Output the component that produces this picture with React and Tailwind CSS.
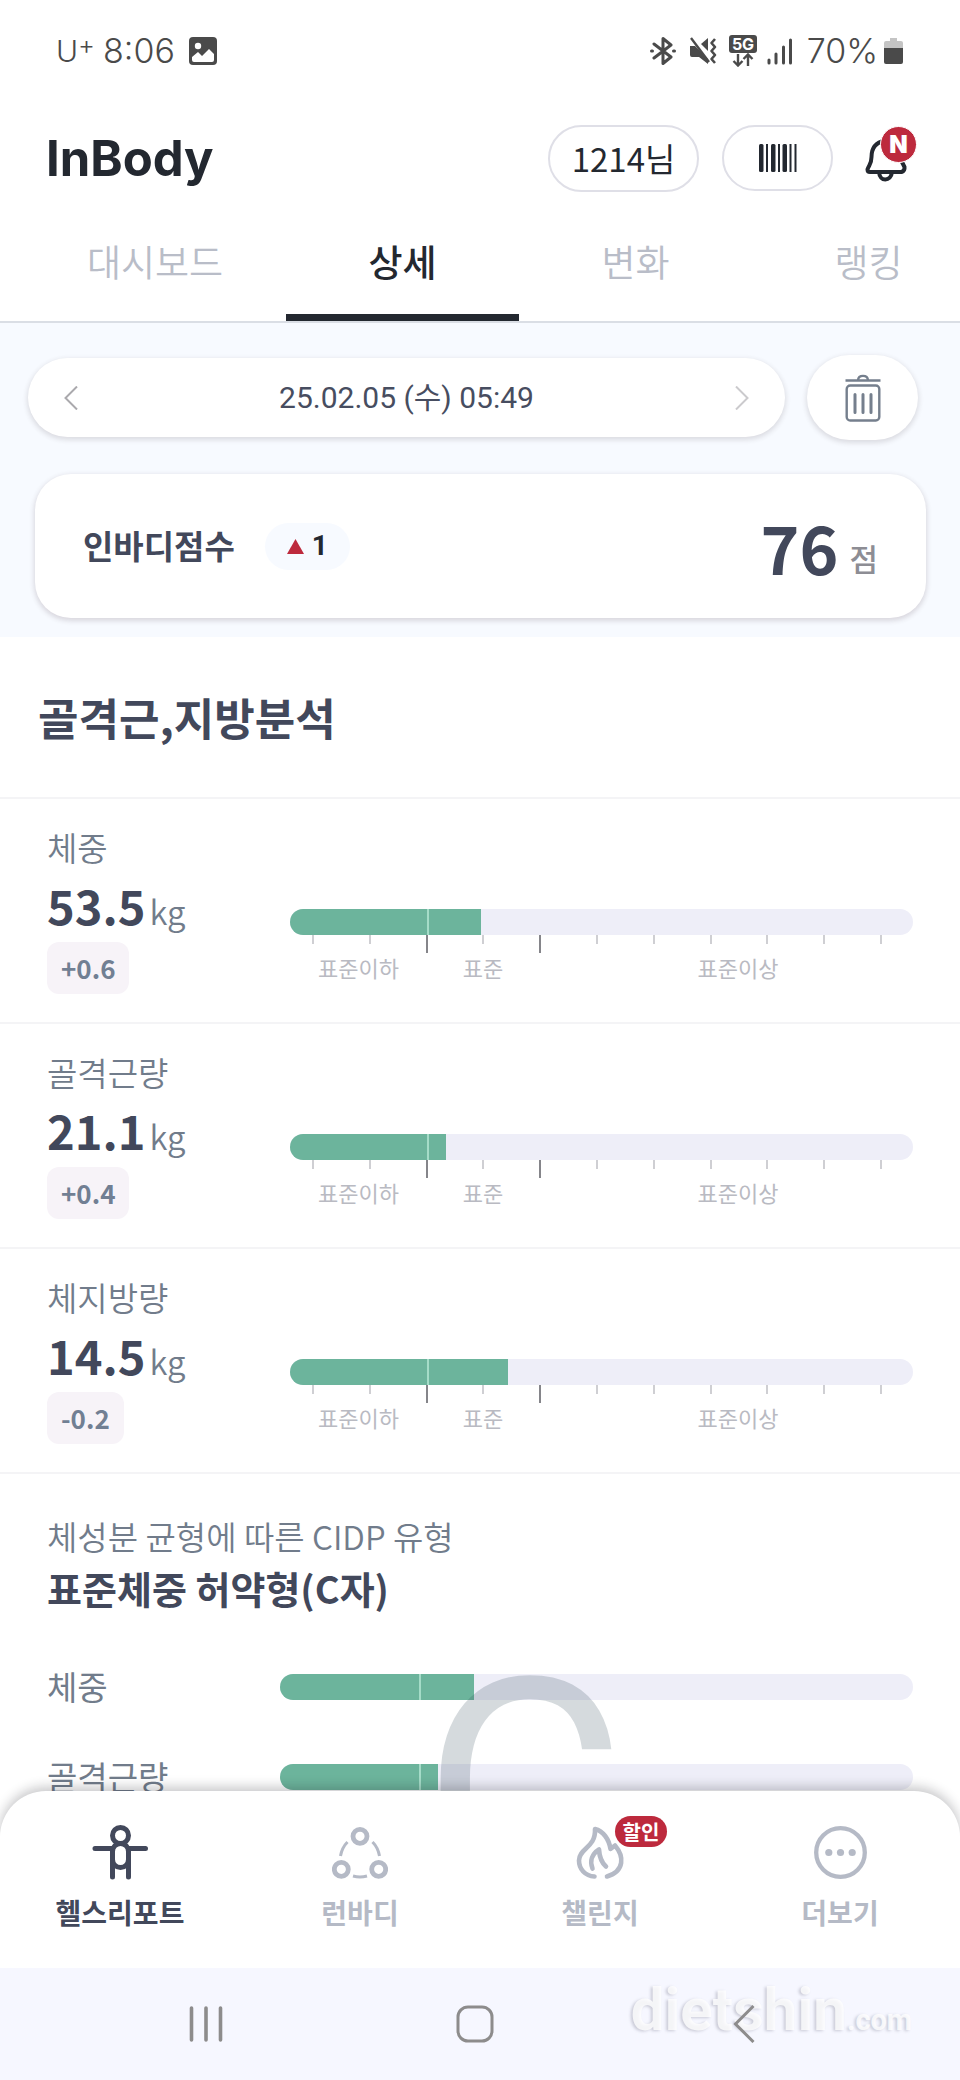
import clsx from 'clsx';

// ============================================
// DATA
// ============================================
const tabs = [
  { label: '대시보드', width: 'w-[262px]' },
  { label: '상세', width: 'w-[233px]', active: true },
  { label: '변화', width: 'w-[233px]' },
  { label: '랭킹', width: 'w-[233px]' },
];

// percent of the bar where the standard range starts
const STANDARD_START = 22;

const metrics = [
  { label: '체중', value: '53.5', diff: '+0.6', percent: 30.7 },
  { label: '골격근량', value: '21.1', diff: '+0.4', percent: 25 },
  { label: '체지방량', value: '14.5', diff: '-0.2', percent: 35 },
];

const cidpRows = [
  { label: '체중', percent: 30.7 },
  { label: '골격근량', percent: 25 },
];

const ticks = [false, false, true, false, true, false, false, false, false, false, false];

// ============================================
// STATUS BAR
// ============================================
const StatusBar = () => (
  <div className="flex h-[102px] items-center pl-14 pr-[57px] font-['Inter',sans-serif] text-[34px] font-light text-[#4a4a4a]">
    <div className="flex items-center">
      <span className="flex items-start text-3xl leading-none">
        U<span className="-mt-1 text-[26px] leading-none">+</span>
      </span>
      <span className="ml-2 leading-none">8:06</span>
      <svg className="ml-[14px] size-7" viewBox="0 0 28 28">
        <rect width="28" height="28" rx="4" fill="#4a4a4a" />
        <circle cx="9" cy="9" r="3.2" fill="#fff" />
        <path d="M3 23V20L9 15L13 19L20 12L25 17V23Q25 25 23 25H5Q3 25 3 23Z" fill="#fff" />
      </svg>
    </div>

    <div className="ml-auto flex items-center">
      <svg className="h-7 w-[26px]" viewBox="0 0 26 28" fill="none" stroke="#4a4a4a" strokeWidth="3" strokeLinejoin="round" strokeLinecap="round">
        <path d="M4 7L21 20L13 26.5V1.5L21 8L4 21" />
        <path d="M1.5 14H2.5M23.5 14H24.5" />
      </svg>
      <svg className="ml-[13px] h-7 w-7" viewBox="0 0 28 28">
        <path d="M1 9H6L19 22V27L10 20H3Q1 20 1 18Z" fill="#4a4a4a" />
        <path d="M12 7L19 1V14Z" fill="#4a4a4a" />
        <path d="M2 1L20 25" stroke="#4a4a4a" strokeWidth="2.4" />
        <path d="M26 2L22.500 6L26 10L22.500 14L26 18L22.500 22L26 26" fill="none" stroke="#4a4a4a" strokeWidth="2.600" strokeLinejoin="round" />
      </svg>
      <svg className="ml-3 h-8 w-7" viewBox="0 0 28 32">
        <rect width="28" height="18" rx="3" fill="#4a4a4a" />
        <text x="14" y="15" textAnchor="middle" fontSize="16" fontWeight="700" fill="#fff">
          5G
        </text>
        <path d="M9 19V30M4.500 26L9 30.500L13.500 26M19 31V20M14.500 24L19 19.500L23.500 24" fill="none" stroke="#4a4a4a" strokeWidth="2.400" />
      </svg>
      <svg className="ml-[10px] h-[27px] w-[26px]" viewBox="0 0 26 27" stroke="#4a4a4a" strokeWidth="3" strokeLinecap="round">
        <path d="M2 22V25M9 16V25M16.500 9V25M23.500 2V25" />
      </svg>
      <span className="ml-[14px] leading-none">70%</span>
      <svg className="ml-1.5 h-7 w-[19px]" viewBox="0 0 19 28">
        <path d="M6 1H13V4H17Q19 4 19 6V12H0V6Q0 4 2 4H6Z" fill="#c4c4c4" />
        <path d="M0 11H19V25Q19 27 17 27H2Q0 27 0 25Z" fill="#4a4a4a" />
      </svg>
    </div>
  </div>
);

// ============================================
// HEADER
// ============================================
const Header = () => (
  <header className="flex h-28 items-center pl-[46px] pr-[43px]">
    <h1 className="font-['Inter',sans-serif] text-[49px] font-bold leading-none text-[#232830]">InBody</h1>

    <button
      type="button"
      className="ml-auto flex h-[67px] w-[151px] items-center justify-center rounded-full border-2 border-[#dfdfe7] text-[33px] leading-none text-[#232830]"
    >
      1214님
    </button>
    <button
      type="button"
      aria-label="바코드"
      className="ml-[23px] flex h-[66px] w-[111px] items-center justify-center rounded-full border-2 border-[#dfdfe7]"
    >
      <svg className="h-7 w-[38px]" viewBox="0 0 38 28" fill="#232830">
        <rect x="0" width="4.500" height="28" rx="1.500" />
        <rect x="7" width="2" height="28" />
        <rect x="12" width="4.500" height="28" rx="1.500" />
        <rect x="19" width="2" height="28" />
        <rect x="23.500" width="4.500" height="28" rx="1.500" />
        <rect x="30.500" width="2" height="28" />
        <rect x="35.500" width="2" height="28" />
      </svg>
    </button>
    <button type="button" aria-label="알림" className="relative ml-8 h-[60px] w-[52px]">
      <svg className="size-full" viewBox="0 0 52 60" fill="none" stroke="#232830" strokeWidth="4">
        <path d="M20 12.500C10 14.500 6.500 21 6.500 29C6.500 36 4 37 2.500 41.500Q2.500 44 5 44H36.500Q40 43 39.500 39L37 34" strokeLinejoin="round" />
        <path d="M14 44C14.500 54 26 54 27 44" />
      </svg>
      <span className="absolute -top-0.5 right-0 flex size-[37px] items-center justify-center rounded-full border border-white bg-[#bd2a3d] font-['Inter',sans-serif] text-2xl font-black leading-none text-white">
        N
      </span>
    </button>
  </header>
);

const Tabs = () => (
  <nav className="flex overflow-hidden border-b-2 border-[#dadee5]">
    {tabs.map((tab) => (
      <button
        key={tab.label}
        type="button"
        className={clsx(
          'h-[107px] shrink-0 border-b-[7px] pb-1 text-[37px]',
          tab.width,
          tab.label === '대시보드' && 'ml-6',
          tab.active ? 'border-[#232830] font-medium text-[#232830]' : 'border-transparent font-[350] text-[#b9bdc8]'
        )}
      >
        {tab.label}
      </button>
    ))}
  </nav>
);

// ============================================
// DATE + SCORE
// ============================================
const ScoreSection = () => (
  <section className="bg-[#f7faff] pb-[19px] pt-8">
    <div className="flex items-center gap-[22px] pl-7 pr-[42px]">
      <div className="flex h-[79px] flex-1 items-center justify-between rounded-full bg-white px-9 shadow-[0_2px_5px_1px_rgba(60,40,50,0.14)]">
        <button type="button" aria-label="이전">
          <svg className="h-6 w-[14px]" viewBox="0 0 14 24" fill="none" stroke="#aaa9ad" strokeWidth="2">
            <path d="M13 0.500L1.500 12L13 23.500" />
          </svg>
        </button>
        <span className="font-['Roboto','Noto_Sans_CJK_KR',sans-serif] text-3xl text-[#474d60]">25.02.05 (수) 05:49</span>
        <button type="button" aria-label="다음">
          <svg className="h-6 w-[14px]" viewBox="0 0 14 24" fill="none" stroke="#cbcacd" strokeWidth="2">
            <path d="M1 0.500L12.500 12L1 23.500" />
          </svg>
        </button>
      </div>
      <button
        type="button"
        aria-label="삭제"
        className="flex h-[85px] w-[111px] items-center justify-center rounded-full bg-white shadow-[0_2px_5px_1px_rgba(60,40,50,0.14)]"
      >
        <svg className="h-12 w-9" viewBox="0 0 36 48" fill="none" stroke="#757f8d" strokeWidth="2.400">
          <path d="M0.500 6.500H35.500M13 6C13.500 0.500 22.500 0.500 23 6" />
          <rect x="1.700" y="11.500" width="32.600" height="35" rx="3.500" />
          <path d="M10 20.500V38.500M18 20.500V38.500M26 20.500V38.500" strokeWidth="3" strokeLinecap="round" />
        </svg>
      </button>
    </div>

    <div className="ml-[35px] mr-[34px] mt-[34px] flex h-36 items-center rounded-[36px] bg-white px-12 shadow-[0_2px_5px_1px_rgba(60,40,50,0.16)]">
      <span className="text-[33px] font-bold text-[#42485b]">인바디점수</span>
      <span className="ml-[30px] flex h-[47px] w-[85px] items-center justify-center gap-2 rounded-full bg-[#f7faff]">
        <svg className="h-[15px] w-[17px]" viewBox="0 0 17 15">
          <path d="M8.500 0L17 15H0Z" fill="#bd2a3d" />
        </svg>
        <span className="font-['Roboto',sans-serif] text-[28px] font-bold leading-none text-[#232830]">1</span>
      </span>
      <div className="ml-auto flex items-end gap-[11px]">
        <span className="text-[66px] font-bold leading-none text-[#42485b]">76</span>
        <span className="mb-1.5 text-[31px] font-medium leading-none text-[#8d8d94]">점</span>
      </div>
    </div>
  </section>
);

// ============================================
// BARS
// ============================================
const Bar = ({ percent }) => (
  <div className="flex h-[26px] flex-1 overflow-hidden rounded-full bg-[#eeeef8]">
    <div className="bg-[#6cb49c]" style={{ width: `${STANDARD_START}%` }} />
    <div className="border-l-2 border-[#a5dcc8] bg-[#6cb49c]" style={{ width: `${percent - STANDARD_START}%` }} />
  </div>
);

const MetricRow = ({ metric }) => (
  <li className="flex border-b-2 border-[#f4f4f6] px-[47px] pb-7">
    <div className="w-[243px] pt-7">
      <h3 className="text-[33px] font-[350] leading-10 text-[#717c8b]">{metric.label}</h3>
      <p className="mt-[10px] flex items-baseline gap-1 leading-[56px]">
        <span className="text-[47px] font-bold leading-[56px] text-[#42485b]">{metric.value}</span>
        <span className="text-[33px] font-[350] leading-10 text-[#717c8b]">kg</span>
      </p>
      <span className="mt-[9px] inline-flex h-[52px] items-center rounded-xl bg-[#f7f3f8] px-[14px] pb-0.5 align-top text-[26px] font-bold text-[#717f93]">
        {metric.diff}
      </span>
    </div>
    <div className="flex-1 pt-[110px]">
      <div className="flex">
        <Bar percent={metric.percent} />
      </div>
      <div className="flex h-[18px] items-start justify-between pl-[22px] pr-[31px]">
        {ticks.map((major, i) => (
          <span key={i} className={clsx('w-0.5', major ? 'h-[18px] bg-[#85858a]' : 'h-[9px] bg-[#cfcfd3]')} />
        ))}
      </div>
      <div className="grid grid-cols-[22%_18%_1fr] text-center text-[22px] leading-7 text-[#b9bac2]">
        <span>표준이하</span>
        <span>표준</span>
        <span className="pl-6">표준이상</span>
      </div>
    </div>
  </li>
);

const CidpSection = () => (
  <section className="pt-[42px]">
    <p className="px-[47px] text-[33px] font-[350] leading-10 text-[#717c8b]">체성분 균형에 따른 CIDP 유형</p>
    <h2 className="mt-2 px-[47px] text-[38px] font-bold leading-[48px] text-[#42485b]">표준체중 허약형(C자)</h2>
    <div className="relative mt-[30px]">
      {cidpRows.map((row) => (
        <div key={row.label} className="flex h-[90px] items-center px-[47px]">
          <span className="w-[233px] text-[33px] text-[#717c8b]">{row.label}</span>
          <Bar percent={row.percent} />
        </div>
      ))}
      {/* type letter drawn over the bars, cut at the section edge */}
      <div className="absolute inset-x-0 -top-1 bottom-0 overflow-hidden pl-[44%]">
        <span className="block font-['Roboto',sans-serif] text-[312px] leading-none text-[#2e4855]/20">C</span>
      </div>
    </div>
  </section>
);

// ============================================
// BOTTOM NAVIGATION
// ============================================
const ReportIcon = () => (
  <svg className="size-14" viewBox="0 0 56 56" fill="none" stroke="currentColor" strokeWidth="5" strokeLinecap="round">
    <circle cx="28.500" cy="11.500" r="8" />
    <path d="M3 24.500H20M37 24.500H53.500" />
    <rect x="20.500" y="19.500" width="16" height="24" rx="8" />
    <path d="M20.500 28V53M36.500 28V53" />
  </svg>
);

const RunIcon = () => (
  <svg className="size-14" viewBox="0 0 56 56" fill="none" stroke="currentColor" strokeWidth="4.800">
    <circle cx="28" cy="12.300" r="7" />
    <circle cx="9.300" cy="45.300" r="7" />
    <circle cx="46.700" cy="45.300" r="7" />
    <path d="M8.500 32Q10 23.500 15.500 18M47.500 32Q46 23.500 40.500 18M21 52Q28 54 35 52" strokeWidth="3" />
  </svg>
);

const FlameIcon = () => (
  <svg className="size-14" viewBox="0 0 56 56" fill="none" stroke="currentColor" strokeWidth="4.600" strokeLinecap="round" strokeLinejoin="round">
    <path d="M22.500 52.500C13 52 7 45 7 36.500C7 24 24 24 23 5C31 7 37 15 38.500 25L43 21.500C52 32 53 47 35 52.500" />
    <path d="M20.500 44.500C17.500 37 20 30 27 25.500C27.500 34 29.500 38.500 34 42.500" />
  </svg>
);

const MoreIcon = () => (
  <svg className="size-14" viewBox="0 0 56 56" fill="none">
    <circle cx="28.500" cy="28.500" r="24.300" stroke="currentColor" strokeWidth="4.300" />
    <circle cx="16.800" cy="28.500" r="3.600" fill="currentColor" />
    <circle cx="28.500" cy="28.500" r="3.600" fill="currentColor" />
    <circle cx="40.200" cy="28.500" r="3.600" fill="currentColor" />
  </svg>
);

const navItems = [
  { label: '헬스리포트', icon: ReportIcon, active: true },
  { label: '런바디', icon: RunIcon },
  { label: '챌린지', icon: FlameIcon, badge: '할인' },
  { label: '더보기', icon: MoreIcon },
];

const BottomNav = () => (
  <nav className="relative z-10 -mt-[31px] grid h-[177px] grid-cols-4 items-start rounded-t-[46px] bg-white pt-[33px] shadow-[0_-4px_12px_rgba(20,20,30,0.24)]">
    {navItems.map(({ label, icon: Icon, badge, active }) => (
      <a key={label} href="#" className={clsx('flex flex-col items-center', active ? 'text-[#42485b]' : 'text-[#b5bac6]')}>
        <span className="relative">
          <Icon />
          {badge && (
            <span className="absolute -top-2 left-[43px] flex h-[31px] w-[52px] items-center justify-center rounded-full bg-[#bd2a3d] text-xl font-bold leading-none text-white">
              {badge}
            </span>
          )}
        </span>
        <span className="mt-[14px] text-[28px] font-bold leading-9">{label}</span>
      </a>
    ))}
  </nav>
);

const SystemNav = () => (
  <div className="relative z-20 grid h-28 grid-cols-3 items-center justify-items-center bg-[#f6f7ff] pl-[72px] pr-[82px]">
    <span className="pointer-events-none absolute bottom-10 right-12 whitespace-nowrap font-['Roboto',sans-serif] text-6xl font-bold leading-none text-white/80 [text-shadow:-2px_1px_3px_rgba(90,90,110,0.28)]">
      dietshin<span className="text-[29px]">.com</span>
    </span>
    <button type="button" aria-label="최근 앱" className="relative">
      <svg className="h-[38px] w-9" viewBox="0 0 36 38" stroke="#8d8c8c" strokeWidth="3.600" strokeLinecap="round">
        <path d="M3.500 3V35M18 3V35M32.500 3V35" />
      </svg>
    </button>
    <button type="button" aria-label="홈" className="relative">
      <svg className="size-[38px]" viewBox="0 0 38 38" fill="none" stroke="#8d8c8c" strokeWidth="3">
        <rect x="2" y="2" width="34" height="34" rx="10" />
      </svg>
    </button>
    <button type="button" aria-label="뒤로" className="relative">
      <svg className="h-[38px] w-[22px]" viewBox="0 0 22 38" fill="none" stroke="#8d8c8c" strokeWidth="3">
        <path d="M20.500 1L2.500 19L20.500 37" />
      </svg>
    </button>
  </div>
);

// ============================================
// MAIN APP
// ============================================
const App = () => {
  return (
    <div className="flex min-h-screen flex-col overflow-hidden bg-white font-['Noto_Sans_CJK_KR',sans-serif]">
      <StatusBar />
      <Header />
      <Tabs />
      <main>
        <ScoreSection />
        <h2 className="flex h-[162px] items-center border-b-2 border-[#f4f4f6] px-[38px] text-[44px] font-bold text-[#42485b]">
          골격근,지방분석
        </h2>
        <ul>
          {metrics.map((metric) => (
            <MetricRow key={metric.label} metric={metric} />
          ))}
        </ul>
        <CidpSection />
      </main>
      <BottomNav />
      <SystemNav />
    </div>
  );
};

export default App;
